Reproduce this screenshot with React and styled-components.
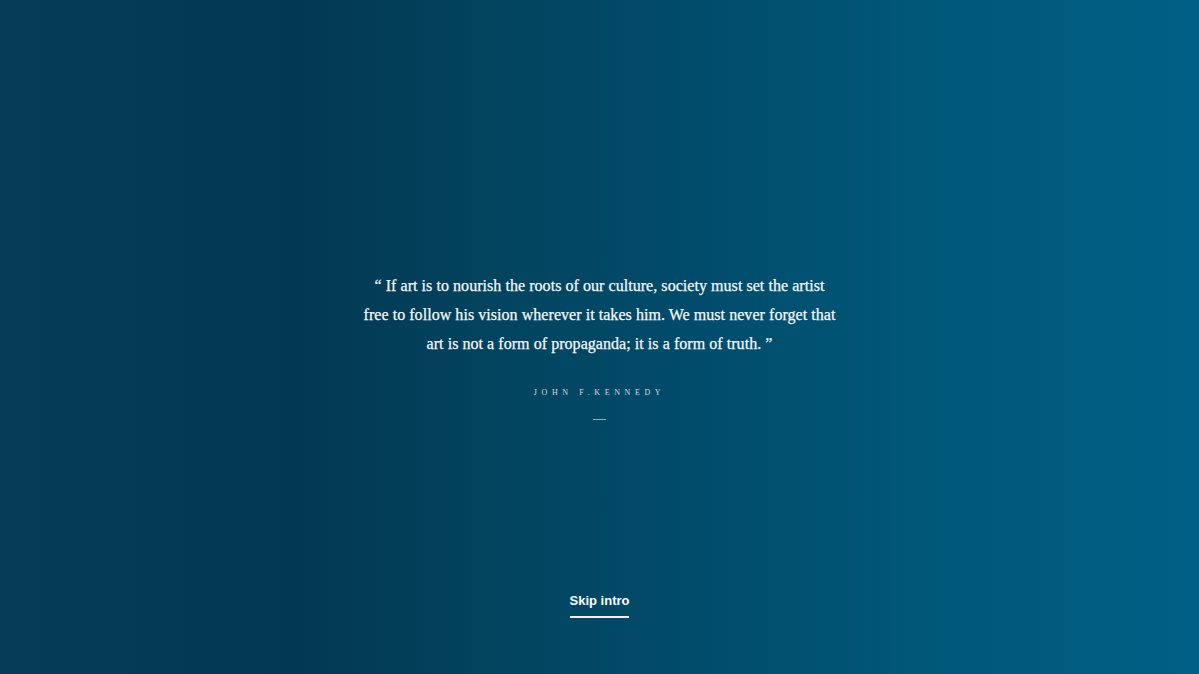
import React from 'react';
import styled, { createGlobalStyle } from 'styled-components';

const GlobalStyle = createGlobalStyle`
  html, body {
    margin: 0;
    padding: 0;
    height: 100%;
  }
  #root {
    height: 100%;
  }
`;

const quoteLines = [
  '“ If art is to nourish the roots of our culture, society must set the artist',
  'free to follow his vision wherever it takes him. We must never forget that',
  'art is not a form of propaganda; it is a form of truth. ”',
];

const App = () => {
  return (
    <>
      <GlobalStyle />
      <Screen>
        <QuoteBlock>
          <Quote>
            {quoteLines.map((line, i) => (
              <Line key={i}>{line}</Line>
            ))}
          </Quote>
          <Author>John F.Kennedy</Author>
          <Dash />
        </QuoteBlock>
        <SkipLink href="#">Skip intro</SkipLink>
      </Screen>
    </>
  );
};

const Screen = styled.main`
  height: 100vh;
  display: flex;
  flex-direction: column;
  align-items: center;
  background: linear-gradient(90deg, #073c58 0%, #033852 25%, #02445f 42%, #014d6d 60%, #005879 78%, #005f86 100%);
  overflow: hidden;
`;

const QuoteBlock = styled.section`
  flex: 1;
  display: flex;
  flex-direction: column;
  align-items: center;
  justify-content: center;
  padding-top: 97px;
`;

const Quote = styled.p`
  margin: 0;
  text-align: center;
  font-family: "Liberation Serif", "DejaVu Serif", serif;
  font-size: 16px;
  line-height: 29px;
  letter-spacing: 0.05px;
  color: #f6f7f8;
  -webkit-text-stroke: 0.25px #f6f7f8;
`;

const Line = styled.span`
  display: block;
  white-space: nowrap;
`;

const Author = styled.div`
  margin-top: 30px;
  font-family: "Liberation Serif", serif;
  font-size: 8px;
  letter-spacing: 4.6px;
  text-transform: uppercase;
  color: #d3dbe2;
`;

const Dash = styled.div`
  margin-top: 22px;
  width: 13px;
  height: 1px;
  background: #7fb0c8;
`;

const SkipLink = styled.a`
  margin-bottom: 56px;
  padding-bottom: 8px;
  border-bottom: 2px solid #f2eef2;
  font-family: "Liberation Sans", Arial, sans-serif;
  font-weight: bold;
  font-size: 13px;
  color: #ffffff;
  text-decoration: none;
`;

export default App;
